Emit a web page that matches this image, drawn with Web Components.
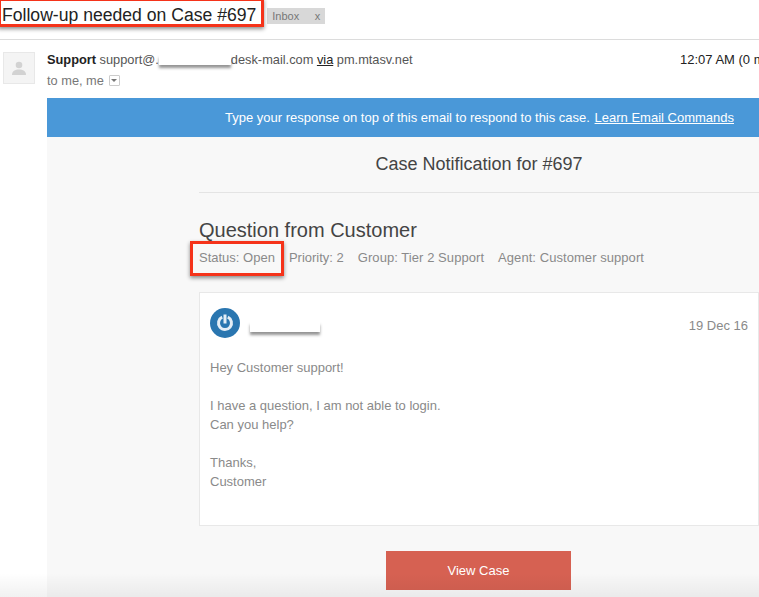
<!DOCTYPE html>
<html>
<head>
<meta charset="utf-8">
<title>Follow-up needed on Case #697</title>
<style>
    html, body { margin: 0; padding: 0; height: 597px; overflow: hidden; background: #fff; }
    body { font-family: "Liberation Sans", Arial, sans-serif; color: #222; }
</style>
</head>
<body>
<mail-view></mail-view>
<script>
    // small helper so every element just declares its markup
    class Base extends HTMLElement {
        constructor(html) {
            super();
            this.attachShadow({mode: "open"});
            this.shadowRoot.innerHTML = html;
        }
    }

    // red hand drawn annotation, sits over the thing it marks
    class CalloutBox extends Base {
        constructor() {
            super(`<style>
                :host { display: inline-block; position: relative; }
                .mark {
                    position: absolute; box-sizing: border-box;
                    top: var(--top, -5px); left: var(--left, -9px);
                    right: var(--right, -9px); bottom: var(--bottom, -5px);
                    border: 3px solid #f5331a;
                    box-shadow: 0 2px 4px rgba(0,0,0,.45);
                    pointer-events: none;
                }
            </style><slot></slot><div class="mark"></div>`);
        }
    }

    // blurred out bit of the screenshot
    class BlurMask extends Base {
        constructor() {
            super(`<style>
                :host {
                    display: inline-block; height: 10px; vertical-align: -1px;
                    background: #fff;
                    box-shadow: 0 3px 3px rgba(60,60,60,.55);
                    width: var(--w, 72px);
                    filter: blur(.6px);
                }
            </style>`);
        }
    }

    class MailSubject extends Base {
        constructor() {
            super(`<style>
                :host {
                    display: flex; align-items: flex-start; height: 39px;
                    border-bottom: 1px solid #dcdcdc;
                }
                h1 { margin: 0; font-weight: normal; font-size: 17.6px; line-height: 21px; padding: 5px 0 0 2px; color: #222; }
                callout-box { --top: -2px; --left: -2px; --right: -8px; --bottom: -1px; }
                .tag {
                    margin: 8px 0 0 11px; width: 58px; height: 16px; box-sizing: border-box;
                    background: #d8d8d8; color: #777; font-size: 11px; line-height: 16px;
                    padding: 0 5px; display: flex; justify-content: space-between;
                }
            </style>
            <callout-box><h1><slot></slot></h1></callout-box>
            <div class="tag"><span>Inbox</span><span>x</span></div>`);
        }
    }

    class SenderRow extends Base {
        constructor() {
            super(`<style>
                :host {
                    display: flex; height: 58px; box-sizing: border-box; padding: 12px 0 0 3px;
                    position: relative; font-size: 12.8px; color: #555;
                }
                .avatar {
                    width: 32px; height: 32px; box-sizing: border-box; flex: none;
                    border: 1px solid #e8e8e8; background: #f4f4f4;
                    display: flex; align-items: center; justify-content: center;
                }
                .who { margin-left: 12px; flex: 1; line-height: 15px; white-space: nowrap; }
                .line2 { margin-top: 6px; color: #777; display: flex; align-items: center; }
                b { color: #222; }
                u { color: #222; }
                .drop {
                    width: 11px; height: 11px; box-sizing: border-box; margin-left: 5px;
                    border: 1px solid #ccc; border-radius: 1px; display: flex; align-items: center; justify-content: center;
                }
                .drop i { border: 3px solid transparent; border-top: 3px solid #777; border-bottom: 0; }
                .time { position: absolute; left: 680px; top: 12px; color: #222; white-space: nowrap; line-height: 15px; font-size: 13px; }
            </style>
            <div class="avatar">
                <svg width="14" height="15" viewBox="0 0 14 15"><circle cx="7" cy="4" r="3.3" fill="#d2d2d2"/><path d="M0 14c0-4 3-5.500 7-5.500s7 1.500 7 5.500z" fill="#d2d2d2"/></svg>
            </div>
            <div class="who">
                <div><b>Support</b> support@.<blur-mask></blur-mask>desk-mail.com <u>via</u> pm.mtasv.net</div>
                <div class="line2">to me, me<span class="drop"><i></i></span></div>
            </div>
            <div class="time">12:07 AM (0 minutes ago)</div>`);
        }
    }

    class NoticeBar extends Base {
        constructor() {
            super(`<style>
                :host {
                    display: block; height: 39px; background: #4a98d8; color: #fff;
                    font-size: 13px; line-height: 39px; padding-left: 178px; white-space: nowrap;
                }
            </style><slot></slot>`);
        }
    }

    class CasePanel extends Base {
        constructor() {
            super(`<style>
                :host { display: block; margin-left: 47px; height: 499px; background: #f8f8f8; }
                h2 {
                    margin: 0 0 0 152px; height: 55px; border-bottom: 1px solid #e4e4e4;
                    font-weight: normal; font-size: 18px; line-height: 55px; color: #444;
                    text-align: center;
                }
            </style><slot name="bar"></slot><h2><slot name="title"></slot></h2><slot></slot>`);
        }
    }

    class CaseSummary extends Base {
        constructor() {
            super(`<style>
                :host { display: block; margin-left: 152px; color: #444; }
                h3 { margin: 0; font-weight: normal; font-size: 20px; line-height: 24px; padding-top: 25px; color: #444; }
                .meta { display: flex; gap: 14px; font-size: 13px; line-height: 15px; margin-top: 8px; color: #8a8a8a; white-space: nowrap; }
                .wide { letter-spacing: .06px; }
                callout-box { --top: -9px; --left: -9px; --right: -9px; --bottom: -11px; }
            </style>
            <h3>Question from Customer</h3>
            <div class="meta">
                <callout-box>Status: Open</callout-box>
                <span>Priority: 2</span><span class="wide">Group: Tier 2 Support</span><span class="wide">Agent: Customer support</span>
            </div>`);
        }
    }

    class MessageCard extends Base {
        constructor() {
            super(`<style>
                :host {
                    display: block; margin: 27px 0 0 152px; height: 234px; box-sizing: border-box;
                    background: #fff; border: 1px solid #e8e8e8; padding: 15px 10px 0;
                    font-size: 13px; color: #8a8a8a;
                }
                .top { display: flex; align-items: center; justify-content: space-between; height: 30px; }
                .from { display: flex; align-items: center; }
                .from blur-mask { margin: 8px 0 0 10px; --w: 70px; }
                .date { padding-top: 5px; color: #8a8a8a; }
                .text { margin-top: 20px; line-height: 19px; }
            </style>
            <div class="top">
                <div class="from">
                    <svg width="30" height="30" viewBox="0 0 30 30">
                        <circle cx="15" cy="15" r="15" fill="#2a76b0"/>
                        <path d="M12.200 9.200A6.500 6.500 0 1 0 17.800 9.200" fill="none" stroke="#e4eef6" stroke-width="3"/>
                        <rect x="13.500" y="6.500" width="3" height="9" fill="#e4eef6"/>
                    </svg>
                    <blur-mask></blur-mask>
                </div>
                <div class="date"><slot name="date"></slot></div>
            </div>
            <div class="text"><slot></slot></div>`);
        }
    }

    class ViewButton extends Base {
        constructor() {
            super(`<style>
                :host {
                    display: block; width: 185px; height: 39px; margin: 25px 0 0 339px;
                    background: #d66152; color: #fff; font-size: 13px; line-height: 39px; text-align: center;
                }
            </style><slot></slot>`);
        }
    }

    class MailView extends Base {
        constructor() {
            super(`<style>
                :host { display: block; position: relative; width: 759px; height: 597px; overflow: hidden; }
                /* the grey fade lying over the bottom of the page */
                .fade {
                    position: absolute; left: 0; right: 0; bottom: 0; height: 24px;
                    background: linear-gradient(rgba(0,0,0,0), rgba(0,0,0,.055));
                    pointer-events: none;
                }
                p { margin: 0 0 19px; }
            </style>
            <mail-subject>Follow-up needed on Case #697</mail-subject>
            <sender-row></sender-row>
            <case-panel>
                <notice-bar slot="bar">Type your response on top of this email to respond to this case. <u style="margin-left:1px">Learn Email Commands</u></notice-bar>
                <span slot="title">Case Notification for #697</span>
                <case-summary></case-summary>
                <message-card>
                    <span slot="date">19 Dec 16</span>
                    <p>Hey Customer support!</p>
                    <p>I have a question, I am not able to login.<br>Can you help?</p>
                    <p>Thanks,<br>Customer</p>
                </message-card>
                <view-button>View Case</view-button>
            </case-panel>
            <div class="fade"></div>`);
        }
    }

    // leaf elements first, then the ones that use them
    window.customElements.define('callout-box', CalloutBox);
    window.customElements.define('blur-mask', BlurMask);
    window.customElements.define('mail-subject', MailSubject);
    window.customElements.define('sender-row', SenderRow);
    window.customElements.define('notice-bar', NoticeBar);
    window.customElements.define('case-panel', CasePanel);
    window.customElements.define('case-summary', CaseSummary);
    window.customElements.define('message-card', MessageCard);
    window.customElements.define('view-button', ViewButton);
    window.customElements.define('mail-view', MailView);
</script>
</body>
</html>
